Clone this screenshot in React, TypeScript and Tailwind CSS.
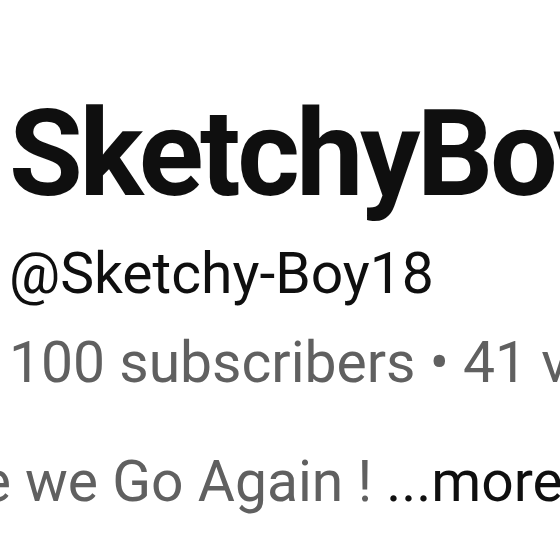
import React from "react";

export default function App() {
  return (
    <div
      className="w-[560px] h-[560px] overflow-hidden bg-white text-[#0f0f0f]"
      style={{ fontFamily: "Roboto, 'Noto Sans', sans-serif" }}
    >
      <div className="pt-[84px] pl-[9px] whitespace-nowrap">
        <h1 className="text-[120px] leading-[140px] font-bold tracking-[-3.5px]">SketchyBoy18</h1>
        <div className="text-[57px] leading-[100px]">@Sketchy-Boy18</div>
        <div className="text-[57px] leading-[77px] text-[#606060]">
          100 subscribers • 41 videos
        </div>
        <div className="mt-[42px] -ml-[118px] text-[57px] leading-[77px] text-[#606060]">
          Here we Go Again ! <span className="text-[#0f0f0f]">...more</span>
        </div>
      </div>
    </div>
  );
}
